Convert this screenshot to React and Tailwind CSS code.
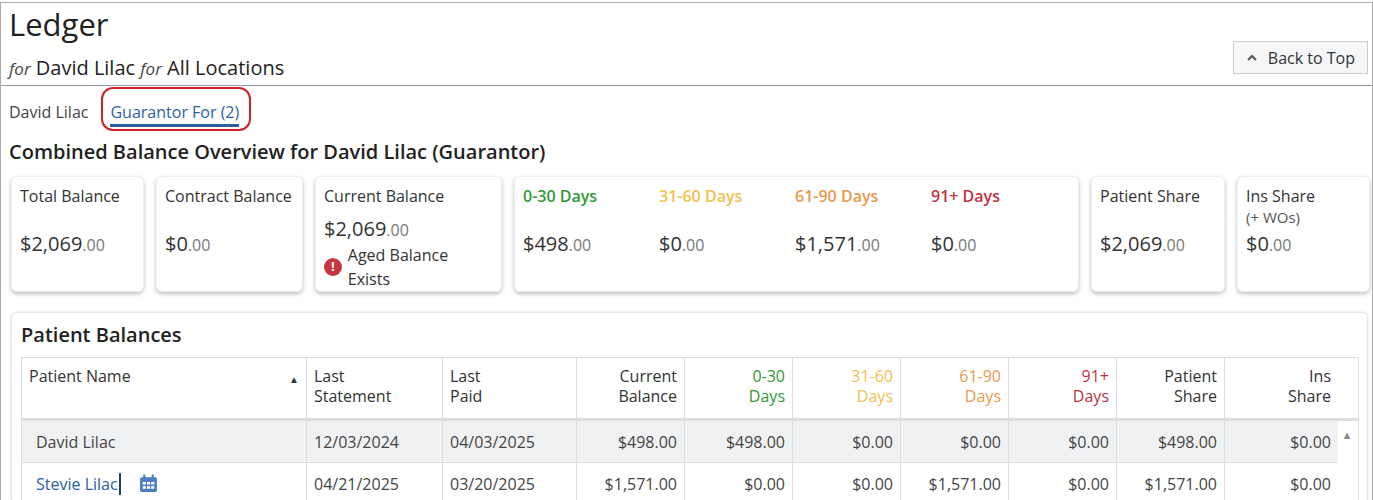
import React from "react";

const F = { fontFamily: '"Open Sans", "Noto Sans", sans-serif' };

function Amt({ d, c }) {
  return (<span className="text-[20px] text-[#333]">{d}<span className="text-[16px] text-[#777]">.{c}</span></span>);
}

function Card({ w, title, sub, d, c, children }) {
  return (
    <div className={`${w} h-[116px] rounded-md bg-white shadow-[0_2px_4px_rgba(0,0,0,0.25)] border border-[#eee] px-[8px] pt-[8px] flex flex-col`}>
      <div className="text-[16px] text-[#333] leading-[22px]">{title}</div>
      {sub ? <div className="text-[15px] text-[#555] leading-[20px]">{sub}</div> : <div className="h-[20px]" />}
      <div className="mt-[4px] leading-[26px]"><Amt d={d} c={c} /></div>
      {children}
    </div>
  );
}

const cols = [
  ["Patient Name", "w-[284px]", "left"],
  ["Last\nStatement", "w-[136px]", "left"],
  ["Last\nPaid", "w-[134px]", "left"],
  ["Current\nBalance", "w-[108px]", "right"],
  ["0-30\nDays", "w-[108px]", "right", "text-[#2e9a36]"],
  ["31-60\nDays", "w-[108px]", "right", "text-[#f2c14e]"],
  ["61-90\nDays", "w-[108px]", "right", "text-[#e79a4d]"],
  ["91+\nDays", "w-[108px]", "right", "text-[#c0323f]"],
  ["Patient\nShare", "w-[108px]", "right"],
  ["Ins\nShare", "w-[114px]", "right"],
];

const rows = [
  ["David Lilac", "12/03/2024", "04/03/2025", "$498.00", "$498.00", "$0.00", "$0.00", "$0.00", "$498.00", "$0.00"],
  ["Stevie Lilac", "04/21/2025", "03/20/2025", "$1,571.00", "$0.00", "$0.00", "$1,571.00", "$0.00", "$1,571.00", "$0.00"],
];

export default function App() {
  return (
    <div style={F} className="w-[1373px] h-[500px] overflow-hidden bg-white">
      <div className="mt-[2px] w-[1373px] h-[498px] border-t border-l border-r border-[#aaa] overflow-hidden">
        <div className="flex justify-between items-end border-b border-[#999] h-[83px] pr-[4px]">
          <div className="pl-[8px]">
            <div className="text-[31px] leading-[40px] text-[#222] mt-[5px]">Ledger</div>
            <div className="text-[20px] leading-[26px] text-[#222] mt-[11px] mb-[3px]"><i className="text-[17px] text-[#444]">for</i> David Lilac <i className="text-[17px] text-[#444]">for</i> All Locations</div>
          </div>
          <button className="mb-[11px] h-[33px] px-[12px] border border-[#ccc] bg-[#f5f6f7] text-[16px] text-[#333] flex items-center gap-[10px]">
            <svg width="12" height="8" viewBox="0 0 12 8"><path d="M2 6 L6 2 L10 6" fill="none" stroke="#555" strokeWidth="2" /></svg>
            Back to Top
          </button>
        </div>
        <div className="flex items-center pl-[8px] mt-[15px] h-[22px] text-[16px]">
          <span className="text-[#444]">David Lilac</span>
          <span className="ml-[22px] relative text-[#2b5fa3]">
            <span className="border-b-[3px] border-[#2b5fa3] pb-[1px]">Guarantor For (2)</span>
            <span className="absolute left-[-9px] top-[-13px] w-[150px] h-[44px] border-2 border-[#d0202a] rounded-[12px]" />
          </span>
        </div>
        <div className="pl-[8px] mt-[15px] text-[20px] font-semibold text-[#222] leading-[28px]">Combined Balance Overview for David Lilac (Guarantor)</div>
        <div className="flex gap-[12px] pl-[10px] mt-[10px]">
          <Card w="w-[133px]" title="Total Balance" d="$2,069" c="00" />
          <Card w="w-[147px]" title="Contract Balance" d="$0" c="00" />
          <Card w="w-[187px]" title="Current Balance" d="$2,069" c="00">
            <div className="flex items-center gap-[6px] text-[16px] text-[#333]">
              <span className="w-[18px] h-[18px] rounded-full bg-[#c9353e] text-white text-[13px] font-bold flex items-center justify-center">!</span>
              Aged Balance Exists
            </div>
          </Card>
          <div className="w-[565px] h-[116px] rounded-md bg-white shadow-[0_2px_4px_rgba(0,0,0,0.25)] border border-[#eee] pl-[8px] pt-[8px] flex">
            {[["0-30 Days", "text-[#2e9a36]", "$498"], ["31-60 Days", "text-[#f2c14e]", "$0"], ["61-90 Days", "text-[#e79a4d]", "$1,571"], ["91+ Days", "text-[#c0323f]", "$0"]].map(([t, c, d]) => (
              <div key={t} className="w-[136px]">
                <div className={`text-[16px] leading-[22px] font-semibold ${c}`}>{t}</div>
                <div className="h-[20px]" />
                <div className="mt-[4px] leading-[26px]"><Amt d={d} c="00" /></div>
              </div>
            ))}
          </div>
          <Card w="w-[134px]" title="Patient Share" d="$2,069" c="00" />
          <Card w="w-[133px]" title="Ins Share" sub="(+ WOs)" d="$0" c="00" />
        </div>
        <div className="ml-[10px] mt-[20px] w-[1357px] rounded-md border border-[#e5e5e5] shadow-[0_0_3px_rgba(0,0,0,0.12)] pl-[9px] pt-[8px]">
          <div className="text-[20px] font-semibold text-[#222] leading-[28px] mb-[8px]">Patient Balances</div>
          <div className="w-[1338px] border border-[#ddd]">
            <div className="flex h-[63px] border-b-[3px] border-[#ddd] text-[16px] leading-[20px] text-[#333]">
              {cols.map(([t, w, a, c], i) => (
                <div key={i} className={`${w} shrink-0 ${i ? "border-l border-[#ddd]" : ""} px-[7px] pt-[8px] whitespace-pre-line ${a === "right" ? "text-right" : ""} ${c || ""} ${i === 0 ? "flex justify-between" : ""}`}>
                  {i === 0 ? (<><span>{t}</span><span className="text-[10px] pt-[3px]">▲</span></>) : t}
                </div>
              ))}
            </div>
            {rows.map((r, ri) => (
              <div key={ri} className="flex">
                <div className={`flex h-[42px] border-b border-[#ddd] ${ri === 0 ? "bg-[#f0f1f3]" : "bg-white"} text-[16px] text-[#444] items-stretch`}>
                  {r.map((v, i) => (
                    <div key={i} className={`${cols[i][1]} shrink-0 ${i ? "border-l border-[#ddd]" : ""} px-[7px] flex items-center ${cols[i][2] === "right" ? "justify-end" : ""} ${i === 0 ? "pl-[14px]" : ""}`}>
                      {i === 0 && ri === 1 ? (
                        <span className="flex items-center text-[#2b5fa3]">{v}<span className="w-[2px] h-[22px] bg-[#1b3f73] ml-[1px]" />
                          <svg className="ml-[18px]" width="19" height="19" viewBox="0 0 18 18"><rect x="1" y="3" width="16" height="14" rx="1.5" fill="#4a7fc4" /><rect x="4" y="0.5" width="2" height="4" fill="#4a7fc4" /><rect x="12" y="0.5" width="2" height="4" fill="#4a7fc4" />{[0,1,2].map(a=>[0,1].map(b=><rect key={a+"-"+b} x={3.5+a*4} y={7.5+b*4} width="3" height="2.5" fill="#fff" />))}</svg>
                        </span>
                      ) : v}
                    </div>
                  ))}
                </div>
                <div className="w-[18px] flex justify-center pt-[6px]">{ri === 0 && <span className="text-[11px] text-[#888]">▲</span>}</div>
              </div>
            ))}
          </div>
        </div>
      </div>
    </div>
  );
}
